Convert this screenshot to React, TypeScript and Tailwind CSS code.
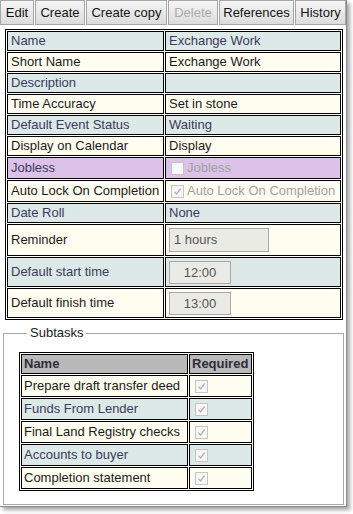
import React from 'react';

type Row = {
  label: string;
  kind: 'text' | 'check' | 'input' | 'time';
  value?: string;
  tone: 'teal' | 'cream' | 'purple';
  checked?: boolean;
};

const rows: Row[] = [
  { label: 'Name', kind: 'text', value: 'Exchange Work', tone: 'teal' },
  { label: 'Short Name', kind: 'text', value: 'Exchange Work', tone: 'cream' },
  { label: 'Description', kind: 'text', value: '', tone: 'teal' },
  { label: 'Time Accuracy', kind: 'text', value: 'Set in stone', tone: 'cream' },
  { label: 'Default Event Status', kind: 'text', value: 'Waiting', tone: 'teal' },
  { label: 'Display on Calendar', kind: 'text', value: 'Display', tone: 'cream' },
  { label: 'Jobless', kind: 'check', value: 'Jobless', tone: 'purple', checked: false },
  { label: 'Auto Lock On Completion', kind: 'check', value: 'Auto Lock On Completion', tone: 'cream', checked: true },
  { label: 'Date Roll', kind: 'text', value: 'None', tone: 'teal' },
  { label: 'Reminder', kind: 'input', value: '1 hours', tone: 'cream' },
  { label: 'Default start time', kind: 'time', value: '12:00', tone: 'teal' },
  { label: 'Default finish time', kind: 'time', value: '13:00', tone: 'cream' },
];

const subtasks = [
  'Prepare draft transfer deed',
  'Funds From Lender',
  'Final Land Registry checks',
  'Accounts to buyer',
  'Completion statement',
];

const buttons = [
  { label: 'Edit', w: 'w-[34px]' },
  { label: 'Create', w: 'w-[50px]' },
  { label: 'Create copy', w: 'w-[81px]' },
  { label: 'Delete', w: 'w-[50px]', disabled: true },
  { label: 'References', w: 'w-[75px]' },
  { label: 'History', w: 'w-[51px]' },
];

const toneClass = {
  teal: 'bg-[#dde9e6] text-[#3a3a62]',
  cream: 'bg-[#fffdf0] text-[#1a1a1a]',
  purple: 'bg-[#dcc2e8] text-[#3a3a62]',
};

function Check({ checked }: { checked?: boolean }) {
  return (
    <span className="inline-flex w-[13px] h-[13px] border border-[#c4c4c4] bg-[#f7f7f7] items-center justify-center shrink-0">
      {checked && (
        <svg width="9" height="9" viewBox="0 0 9 9">
          <path d="M1.5 4.8 L3.6 7 L7.6 1.5" fill="none" stroke="#b4b4b4" strokeWidth="1.3" />
        </svg>
      )}
    </span>
  );
}

export default function App() {
  return (
    <div className="w-[353px] h-[514px] bg-white font-['Liberation_Sans',Arial,sans-serif] text-[13px]">
      <div className="w-[347px] h-[507px] bg-white border-r border-b border-[#8c8c8c] shadow-[3px_3px_4px_rgba(0,0,0,0.35)]">
        {/* toolbar */}
        <div className="flex gap-[1px] h-[25px]">
          {buttons.map((b) => (
            <div
              key={b.label}
              className={`${b.w} h-[25px] flex items-center justify-center whitespace-nowrap border border-[#a6a6a6] bg-gradient-to-b from-[#f5f5f5] to-[#dcdcdc] ${
                b.disabled ? 'text-[#ababab]' : 'text-[#141414]'
              }`}
            >
              {b.label}
            </div>
          ))}
        </div>

        {/* details */}
        <table className="table-fixed mt-[4px] ml-[5px] w-[338px] border-separate border-spacing-[1px] border border-black">
          <colgroup>
            <col className="w-[157px]" />
            <col />
          </colgroup>
          <tbody>
            {rows.map((r) => {
              const tall = r.kind === 'input' ? 'h-[32px]' : r.kind === 'time' ? 'h-[30px]' : r.kind === 'check' ? 'h-[22px]' : 'h-[20px]';
              return (
                <tr key={r.label}>
                  <td className={`${tall} border border-black px-[3px] py-0 leading-[18px] whitespace-nowrap overflow-hidden ${toneClass[r.tone]}`}>
                    {r.label}
                  </td>
                  <td className={`${tall} border border-black px-[3px] py-0 leading-[18px] whitespace-nowrap overflow-hidden ${toneClass[r.tone]}`}>
                    {r.kind === 'text' && r.value}
                    {r.kind === 'check' && (
                      <div className="flex items-center gap-[3px] pl-[2px] text-[#a0a0a0]">
                        <Check checked={r.checked} />
                        <span>{r.value}</span>
                      </div>
                    )}
                    {r.kind === 'input' && (
                      <div className="w-[100px] h-[24px] border border-[#a9a9a9] bg-[#ebebe6] text-[#555] pl-[4px] leading-[22px]">
                        {r.value}
                      </div>
                    )}
                    {r.kind === 'time' && (
                      <div className="w-[62px] h-[23px] border border-[#a9a9a9] bg-[#ebebe6] text-[#555] text-center leading-[21px]">
                        {r.value}
                      </div>
                    )}
                  </td>
                </tr>
              );
            })}
          </tbody>
        </table>

        {/* subtasks */}
        <fieldset className="mt-[6px] ml-[3px] w-[341px] h-[179px] border border-[#a8a8a8] px-[15px] pt-[12px]">
          <legend className="ml-[8px] px-[3px] text-[#1a1a1a] leading-[14px]">Subtasks</legend>
          <table className="table-fixed w-[235px] border-separate border-spacing-[1px] border border-black">
            <colgroup>
              <col className="w-[167px]" />
              <col />
            </colgroup>
            <thead>
              <tr>
                <th className="h-[20px] border border-black bg-[#b9b9b9] text-left font-bold text-[#2e2e3e] px-[2px] py-0 leading-[18px]">
                  Name
                </th>
                <th className="h-[20px] border border-black bg-[#b9b9b9] text-left font-bold text-[#2e2e3e] px-[2px] py-0 leading-[18px] whitespace-nowrap">
                  Required
                </th>
              </tr>
            </thead>
            <tbody>
              {subtasks.map((s, i) => {
                const tone = i % 2 === 0 ? toneClass.cream : toneClass.teal;
                return (
                  <tr key={s}>
                    <td className={`h-[22px] border border-black px-[2px] py-0 leading-[18px] whitespace-nowrap overflow-hidden ${tone}`}>{s}</td>
                    <td className={`h-[22px] border border-black px-[5px] py-0 ${tone}`}>
                      <div className="flex items-center">
                        <Check checked />
                      </div>
                    </td>
                  </tr>
                );
              })}
            </tbody>
          </table>
        </fieldset>
      </div>
    </div>
  );
}
